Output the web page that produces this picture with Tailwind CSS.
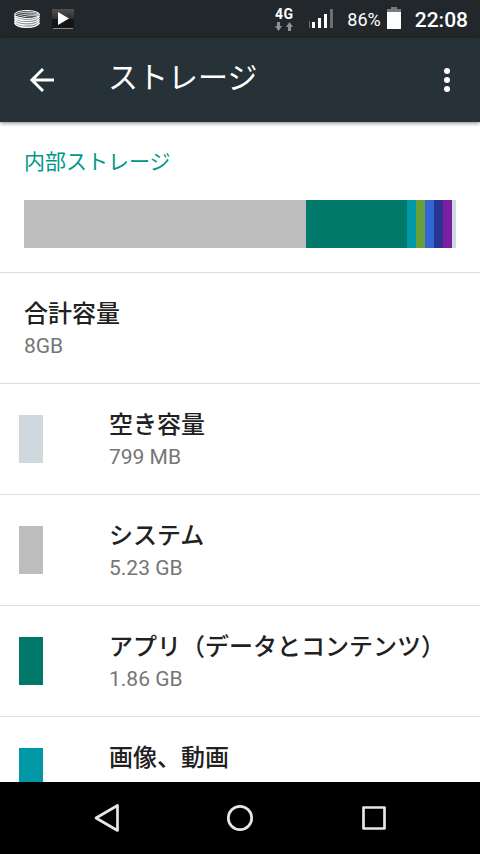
<!DOCTYPE html>
<html lang="ja">
<head>
<meta charset="utf-8">
<meta name="viewport" content="width=device-width, initial-scale=1">
<title>ストレージ</title>
<script src="https://cdn.jsdelivr.net/npm/@tailwindcss/browser@4"></script>
</head>
<body class="flex h-screen flex-col overflow-hidden bg-white font-[Roboto,'Noto_Sans_CJK_JP',sans-serif] text-[#212121]">
  <div class="flex h-[38px] shrink-0 items-center justify-between bg-[#22272b] pr-3 pl-3.5 text-white">
    <div class="flex items-center gap-3">
      <svg class="h-[18px] w-[26px]" viewBox="0 0 26 18" fill="none" stroke="#fff" aria-hidden="true">
        <path d="M.5 4v9c1 3 7 4.500 12.500 4.500S24.500 16 25.500 13V4" fill="#8a8f92" stroke="none"/>
        <ellipse cx="13" cy="4.500" rx="12.500" ry="4" fill="#3a3f43" stroke-width="1"/>
        <path d="M1 5c5-3 16-4 24-1M2 7c6-3 15-4 23-2M5 8c6-2 12-3 19-2" stroke-width=".8"/>
        <path d="M.5 6c2 6 22 6 25 0M.5 8.200c2 6 22 6 25 0M.5 10.500c2 6 22 6 25 0M.5 12.800c2 6 22 6 25 0" stroke-width="1.200"/>
      </svg>
      <svg class="h-[22px] w-[22px]" viewBox="0 0 22 22" aria-hidden="true">
        <defs><linearGradient id="tile" x2="0" y2="1"><stop stop-color="#505050"/><stop offset=".5" stop-color="#303030"/><stop offset=".55" stop-color="#151515"/><stop offset="1" stop-color="#161616"/></linearGradient></defs>
        <rect y="1" width="22" height="19" fill="url(#tile)"/>
        <path d="M6 4 17 10.500 6 17Z" fill="#fff"/>
        <path d="M1 20.500h20" stroke="#888"/>
      </svg>
    </div>
    <div class="flex items-center">
      <div class="mr-4 flex flex-col items-center">
        <span class="text-sm leading-4 font-bold tracking-wide">4G</span>
        <svg class="h-[10px] w-[18px]" viewBox="0 0 18 10" fill="#8e9295" aria-hidden="true"><path d="M2 0h3v4h2L3.500 9 0 4h2ZM13 9h3V5h2L14.500 0 11 5h2Z"/></svg>
      </div>
      <svg class="mr-3.5 h-5 w-6" viewBox="0 0 24 20" fill="#fff" aria-hidden="true"><path d="M3 13h3v6H3zM9 9h3v10H9zM15 5h3v14h-3z"/><path d="M21 0h3v19h-3zM0 12h1v7H0z" fill="#6b6f72"/></svg>
      <span class="mr-1.5 pt-0.5 text-lg leading-6">86%</span>
      <svg class="mr-3.5 h-6 w-[14px]" viewBox="0 0 14 24" aria-hidden="true"><path d="M4 0h6v2h4v4H0V2h4z" fill="#777b7e"/><path d="M0 5h14v17H0z" fill="#fff"/></svg>
      <span class="pt-0.5 text-[21px] leading-6 font-medium">22:08</span>
    </div>
  </div>

  <header class="z-10 flex h-[84px] shrink-0 items-center bg-[#273238] pr-3 pl-6 text-white shadow-[0_1px_4px_rgba(0,0,0,0.5)]">
    <button type="button" aria-label="戻る" class="mr-12 size-9">
      <svg class="size-9" viewBox="0 0 36 36" fill="none" stroke="currentColor" stroke-width="3" aria-hidden="true"><path d="M30 18H8M19 7 8 18l11 11"/></svg>
    </button>
    <h1 class="flex-1 pb-1 text-3xl">ストレージ</h1>
    <button type="button" aria-label="その他のオプション" class="flex h-12 w-[42px] items-center justify-center">
      <svg class="h-6 w-[6px]" viewBox="0 0 6 24" fill="currentColor" aria-hidden="true"><circle cx="3" cy="3" r="3"/><circle cx="3" cy="12" r="3"/><circle cx="3" cy="21" r="3"/></svg>
    </button>
  </header>

  <main class="min-h-0 flex-1 overflow-hidden">
    <section class="border-b border-[#dedede] px-6 pt-6 pb-6">
      <h2 class="mb-[22px] text-[21px] leading-8 text-[#009688]">内部ストレージ</h2>
      <div class="flex h-12" role="img" aria-label="ストレージの使用状況">
        <div class="grow-[282] bg-[#bdbdbd]"></div>
        <div class="grow-[101] bg-[#00796b]"></div>
        <div class="grow-[9] bg-[#0097a7]"></div>
        <div class="grow-[9] bg-[#689f38]"></div>
        <div class="grow-[9] bg-[#3367d6]"></div>
        <div class="grow-[9] bg-[#283593]"></div>
        <div class="grow-[9] bg-[#7b1fa2]"></div>
        <div class="grow-[4] bg-[#cfd8dc]"></div>
      </div>
    </section>
    <ul>
      <li class="border-b border-[#dedede] px-6 pt-[25px] pb-[21px]">
        <p class="text-2xl leading-8 font-medium">合計容量</p>
        <p class="text-[21px] leading-8 text-[#757575]">8GB</p>
      </li>
      <li class="flex items-start border-b border-[#dedede] pt-[25px] pr-6 pb-[21px] pl-[19px]">
        <span class="mt-1.5 mr-[66px] h-12 w-6 shrink-0 bg-[#cfd8dc]"></span>
        <div>
          <p class="text-2xl leading-8 font-medium">空き容量</p>
          <p class="text-[21px] leading-8 text-[#757575]">799 MB</p>
        </div>
      </li>
      <li class="flex items-start border-b border-[#dedede] pt-[25px] pr-6 pb-[21px] pl-[19px]">
        <span class="mt-1.5 mr-[66px] h-12 w-6 shrink-0 bg-[#bdbdbd]"></span>
        <div>
          <p class="text-2xl leading-8 font-medium">システム</p>
          <p class="text-[21px] leading-8 text-[#757575]">5.23 GB</p>
        </div>
      </li>
      <li class="flex items-start border-b border-[#dedede] pt-[25px] pr-6 pb-[21px] pl-[19px]">
        <span class="mt-1.5 mr-[66px] h-12 w-6 shrink-0 bg-[#00796b]"></span>
        <div>
          <p class="text-2xl leading-8 font-medium">アプリ（データとコンテンツ）</p>
          <p class="text-[21px] leading-8 text-[#757575]">1.86 GB</p>
        </div>
      </li>
      <li class="flex items-start pt-[25px] pr-6 pb-[21px] pl-[19px]">
        <span class="mt-1.5 mr-[66px] h-12 w-6 shrink-0 bg-[#0097a7]"></span>
        <p class="text-2xl leading-8 font-medium">画像、動画</p>
      </li>
    </ul>
  </main>

  <nav class="flex h-[72px] shrink-0 items-center justify-center gap-[98px] bg-black text-[#e6e6e6]" aria-label="システムナビゲーション">
    <button type="button" aria-label="戻る" class="size-9">
      <svg class="size-9" viewBox="0 0 36 36" fill="none" stroke="currentColor" stroke-width="2.700" stroke-linejoin="round" aria-hidden="true"><path d="M29.500 5.500v25L8 18Z"/></svg>
    </button>
    <button type="button" aria-label="ホーム" class="size-9">
      <svg class="size-9" viewBox="0 0 36 36" fill="none" stroke="currentColor" stroke-width="2.700" aria-hidden="true"><circle cx="18" cy="18" r="11.700"/></svg>
    </button>
    <button type="button" aria-label="最近使ったアプリ" class="size-9">
      <svg class="size-9" viewBox="0 0 36 36" fill="none" stroke="currentColor" stroke-width="2.700" stroke-linejoin="round" aria-hidden="true"><rect x="7.500" y="7.500" width="21" height="21"/></svg>
    </button>
  </nav>
</body>
</html>
